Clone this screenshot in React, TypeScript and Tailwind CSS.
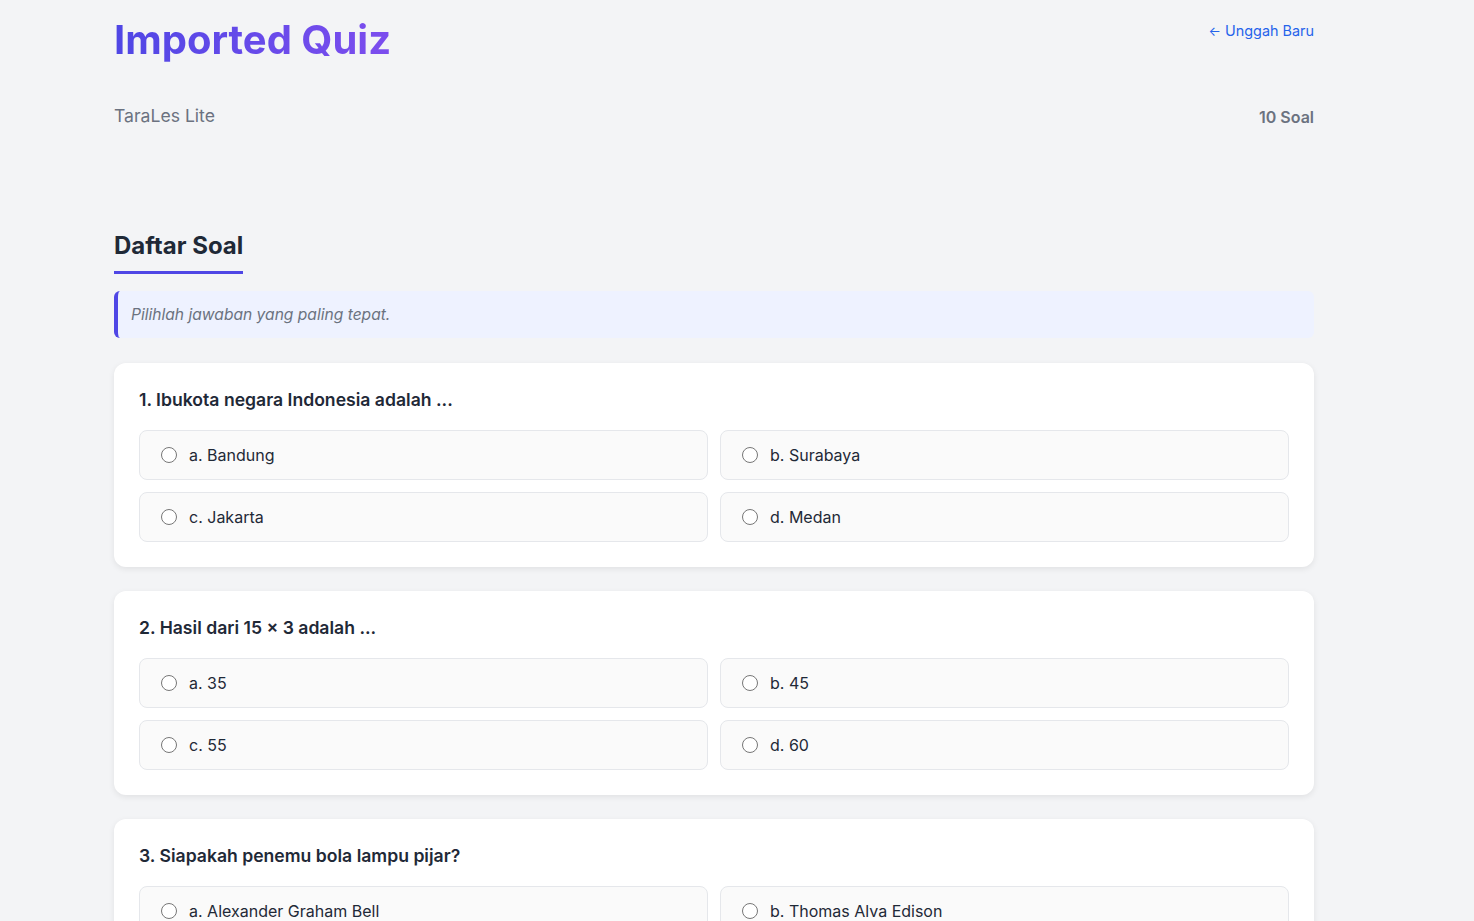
import React from "react";

const questions = [
  { q: "1. Ibukota negara Indonesia adalah ...", opts: ["a. Bandung", "b. Surabaya", "c. Jakarta", "d. Medan"] },
  { q: "2. Hasil dari 15 × 3 adalah ...", opts: ["a. 35", "b. 45", "c. 55", "d. 60"] },
  { q: "3. Siapakah penemu bola lampu pijar?", opts: ["a. Alexander Graham Bell", "b. Thomas Alva Edison", "c. Nikola Tesla", "d. Isaac Newton"] },
];

export default function App() {
  return (
    <div className="min-h-screen bg-[#f3f4f6] font-['Inter',sans-serif] text-[#1f2937]">
      <div className="ml-[114px] w-[1200px] pb-10">
        <header className="flex justify-between items-start pt-[14px]">
          <div className="flex flex-col">
            <h1 className="inline-block self-start text-[40px] leading-[52px] font-bold bg-gradient-to-r from-[#4f46e5] to-[#7c4dee] bg-clip-text text-transparent">
              Imported Quiz
            </h1>
            <p className="mt-[38px] text-[17.6px] leading-[24px] text-[#6b7280]">TaraLes Lite</p>
          </div>
          <div className="flex flex-col items-end">
            <a className="mt-[7px] text-[14.4px] leading-[20px] text-[#2563eb]" href="#">
              <span className="text-[13px]">←</span> Unggah Baru
            </a>
            <p className="mt-[64px] text-[16px] leading-[24px] font-semibold text-[#6b7280]">10 Soal</p>
          </div>
        </header>

        <section className="mt-[101px]">
          <h2 className="inline-block text-[24px] leading-[32px] font-bold text-[#1f2937] pb-[9px] border-b-[3px] border-[#4f46e5]">
            Daftar Soal
          </h2>
          <div className="mt-[17px] h-[47px] flex items-center rounded-[6px] border-l-[4px] border-[#4f46e5] bg-[#eef2ff] pl-[13px]">
            <p className="italic text-[15.6px] text-[#6b7280]">Pilihlah jawaban yang paling tepat.</p>
          </div>

          <div className="mt-[25px] flex flex-col gap-[24px]">
            {questions.map((item, qi) => (
              <div key={qi} className="rounded-[12px] bg-white px-[25px] pt-[25px] pb-[25px] shadow-[0_2px_6px_rgba(0,0,0,0.08)]">
                <h3 className="text-[17.6px] leading-[24px] font-semibold text-[#1f2937]">{item.q}</h3>
                <div className="mt-[18px] grid grid-cols-2 gap-x-[12px] gap-y-[12px]">
                  {item.opts.map((o, oi) => (
                    <label
                      key={oi}
                      className="flex h-[50px] items-center gap-[12px] rounded-[8px] border border-[#e5e7eb] bg-[#fafafa] pl-[21px] text-[16px] text-[#1f2937]"
                    >
                      <input type="radio" name={`q${qi}`} className="m-0 h-[16px] w-[16px]" />
                      <span>{o}</span>
                    </label>
                  ))}
                </div>
              </div>
            ))}
          </div>
        </section>
      </div>
    </div>
  );
}
